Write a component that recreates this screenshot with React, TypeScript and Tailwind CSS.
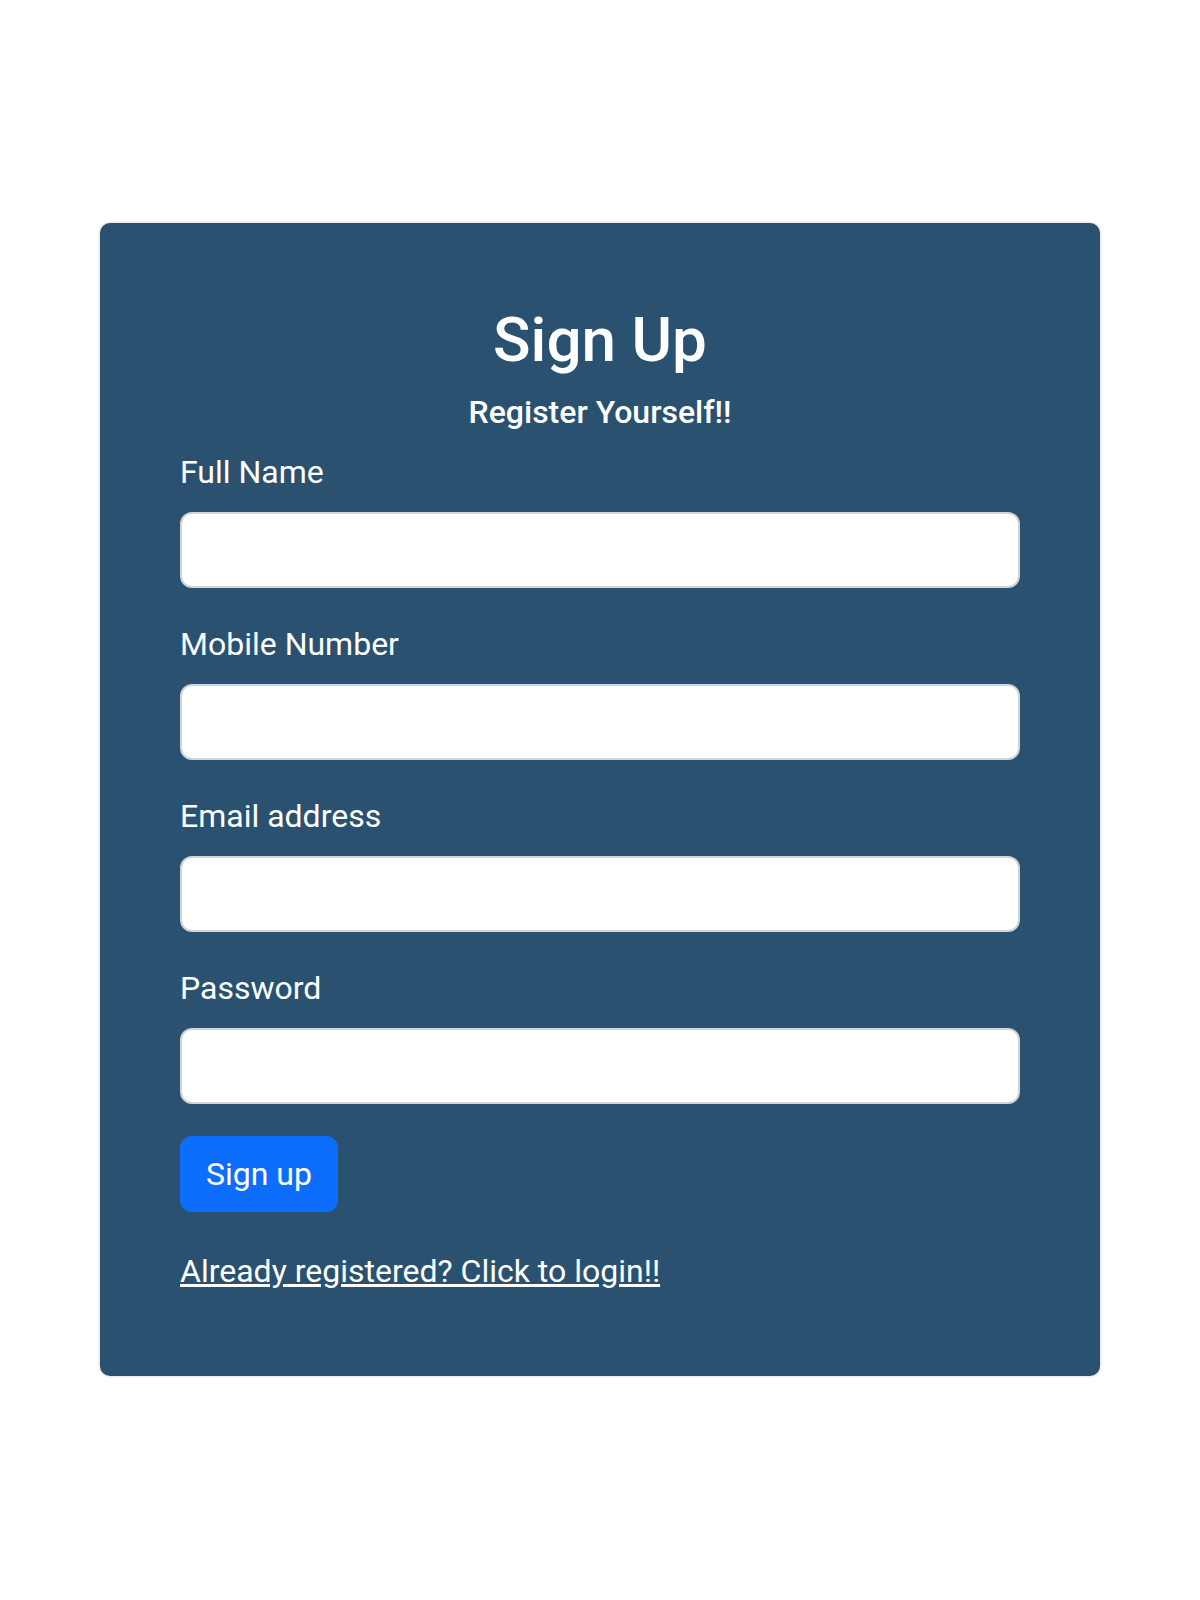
import React from 'react';

const fields = [
  { id: 'name', label: 'Full Name', type: 'text' },
  { id: 'mobile', label: 'Mobile Number', type: 'tel' },
  { id: 'email', label: 'Email address', type: 'email' },
  { id: 'password', label: 'Password', type: 'password' },
];

export default function App() {
  return (
    <div className="min-h-[1600px] bg-white pt-[223px] font-['Roboto',sans-serif]">
      <div className="mx-[100px] rounded-[10px] bg-[#2a5270] px-[80px] pb-[81px] pt-[80px] text-white shadow-[0_0_3px_rgba(0,0,0,0.25)]">
        <h1 className="mb-[16px] text-center text-[62px] font-medium leading-[1.2]">Sign Up</h1>
        <h6 className="mb-[16px] text-center text-[32px] font-medium leading-[1.2]">Register Yourself!!</h6>
        <form onSubmit={(e) => e.preventDefault()}>
          {fields.map((f) => (
            <div key={f.id} className="mb-[32px]">
              <label htmlFor={f.id} className="mb-[16px] block text-[32px] leading-[48px]">
                {f.label}
              </label>
              <input
                id={f.id}
                type={f.type}
                className="block h-[76px] w-full rounded-[12px] border-2 border-[#ced4da] bg-white px-[24px] text-[32px] text-[#212529] outline-none"
              />
            </div>
          ))}
          <button
            type="submit"
            className="h-[76px] rounded-[12px] border-2 border-[#0d6efd] bg-[#0d6efd] px-[24px] text-[32px] leading-[48px] text-white"
          >
            Sign up
          </button>
        </form>
        <p className="mt-[35px] text-[32px] leading-[48px]">
          <a href="#" className="text-white underline">
            Already registered? Click to login!!
          </a>
        </p>
      </div>
    </div>
  );
}
